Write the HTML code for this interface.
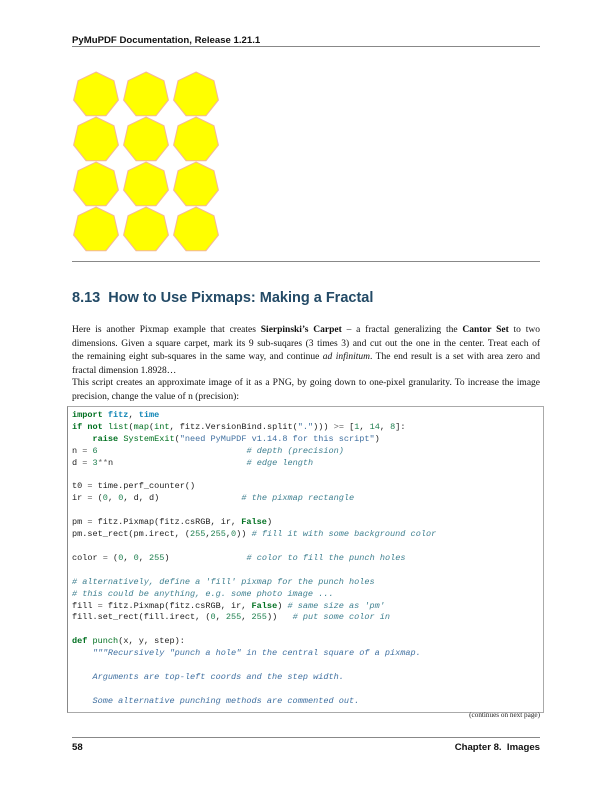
<!DOCTYPE html>
<html><head><meta charset="utf-8"><style>
body{margin:0;width:612px;height:792px;background:#fff;position:relative;overflow:hidden}
.a{position:absolute}
.sans{font-family:"Liberation Sans",sans-serif}
.ser{font-family:"Liberation Serif",serif;font-size:9.5px;color:#111;line-height:13.6px;width:468px}
.ser div{text-align:justify;text-align-last:justify;white-space:nowrap}
.ser div.l{text-align-last:left}
pre{margin:0;font-family:"Liberation Mono",monospace;font-size:8.55px;line-height:11.9px;color:#222}
.k{color:#007020;font-weight:bold}.b{color:#007020}.n{color:#0e84b5;font-weight:bold}
.s{color:#4070a0}.c{color:#408090;font-style:italic}.m{color:#208050}.o{color:#666}
</style></head><body>
<div class="a sans" style="left:72px;top:35px;font-size:9.6px;font-weight:bold;color:#111">PyMuPDF Documentation, Release 1.21.1</div>
<div class="a" style="left:72px;top:46px;width:468px;height:1px;background:#888"></div>
<svg class="a" style="left:0;top:0" width="612" height="270">
<defs><polygon id="h" points="0,-23 17.98,-14.34 22.42,5.12 9.98,20.72 -9.98,20.72 -22.42,5.12 -17.98,-14.34" fill="#ffff00" stroke="#f5b59a" stroke-width="1"/></defs>
<use href="#h" x="96" y="95"/><use href="#h" x="146" y="95"/><use href="#h" x="196" y="95"/>
<use href="#h" x="96" y="140"/><use href="#h" x="146" y="140"/><use href="#h" x="196" y="140"/>
<use href="#h" x="96" y="185"/><use href="#h" x="146" y="185"/><use href="#h" x="196" y="185"/>
<use href="#h" x="96" y="230"/><use href="#h" x="146" y="230"/><use href="#h" x="196" y="230"/>
</svg>
<div class="a" style="left:72px;top:261px;width:468px;height:1px;background:#888"></div>
<div class="a sans" style="left:72px;top:290px;font-size:14.5px;font-weight:bold;color:#234a66">8.13&nbsp; How to Use Pixmaps: Making a Fractal</div>
<div class="a ser" style="left:72px;top:324px">
<div>Here is another Pixmap example that creates <b>Sierpinski’s Carpet</b> – a fractal generalizing the <b>Cantor Set</b> to two</div>
<div>dimensions. Given a square carpet, mark its 9 sub-suqares (3 times 3) and cut out the one in the center. Treat each of</div>
<div>the remaining eight sub-squares in the same way, and continue <i>ad infinitum</i>. The end result is a set with area zero and</div>
<div class="l">fractal dimension 1.8928…</div>
</div>
<div class="a ser" style="left:72px;top:377px">
<div>This script creates an approximate image of it as a PNG, by going down to one-pixel granularity. To increase the image</div>
<div class="l">precision, change the value of n (precision):</div>
</div>
<div class="a" style="left:67px;top:406px;width:475px;height:305px;border:1px solid #aaa;border-left:1px solid #888"></div>
<pre class="a" style="left:72px;top:410px"><span class="k">import</span> <span class="n">fitz</span>, <span class="n">time</span>
<span class="k">if</span> <span class="k">not</span> <span class="b">list</span>(<span class="b">map</span>(<span class="b">int</span>, fitz.VersionBind.split(<span class="s">"."</span>))) <span class="o">&gt;=</span> [<span class="m">1</span>, <span class="m">14</span>, <span class="m">8</span>]:
    <span class="k">raise</span> <span class="b">SystemExit</span>(<span class="s">"need PyMuPDF v1.14.8 for this script"</span>)
n <span class="o">=</span> <span class="m">6</span>                             <span class="c"># depth (precision)</span>
d <span class="o">=</span> <span class="m">3</span><span class="o">**</span>n                          <span class="c"># edge length</span>

t0 <span class="o">=</span> time.perf_counter()
ir <span class="o">=</span> (<span class="m">0</span>, <span class="m">0</span>, d, d)                <span class="c"># the pixmap rectangle</span>

pm <span class="o">=</span> fitz.Pixmap(fitz.csRGB, ir, <span class="k">False</span>)
pm.set_rect(pm.irect, (<span class="m">255</span>,<span class="m">255</span>,<span class="m">0</span>)) <span class="c"># fill it with some background color</span>

color <span class="o">=</span> (<span class="m">0</span>, <span class="m">0</span>, <span class="m">255</span>)               <span class="c"># color to fill the punch holes</span>

<span class="c"># alternatively, define a 'fill' pixmap for the punch holes</span>
<span class="c"># this could be anything, e.g. some photo image ...</span>
fill <span class="o">=</span> fitz.Pixmap(fitz.csRGB, ir, <span class="k">False</span>) <span class="c"># same size as 'pm'</span>
fill.set_rect(fill.irect, (<span class="m">0</span>, <span class="m">255</span>, <span class="m">255</span>))   <span class="c"># put some color in</span>

<span class="k">def</span> <span class="b">punch</span>(x, y, step):
    <span class="s"><i>"""Recursively "punch a hole" in the central square of a pixmap.</i></span>

    <span class="s"><i>Arguments are top-left coords and the step width.</i></span>

    <span class="s"><i>Some alternative punching methods are commented out.</i></span></pre>
<div class="a" style="left:440px;top:711px;width:100px;text-align:right;font-family:'Liberation Serif',serif;font-size:7.2px;color:#222">(continues on next page)</div>
<div class="a" style="left:72px;top:737px;width:468px;height:1px;background:#888"></div>
<div class="a sans" style="left:72px;top:742px;font-size:9.6px;font-weight:bold;color:#111">58</div>
<div class="a sans" style="left:400px;top:742px;width:140px;text-align:right;font-size:9.6px;font-weight:bold;color:#111">Chapter 8.&nbsp; Images</div>
</body></html>
